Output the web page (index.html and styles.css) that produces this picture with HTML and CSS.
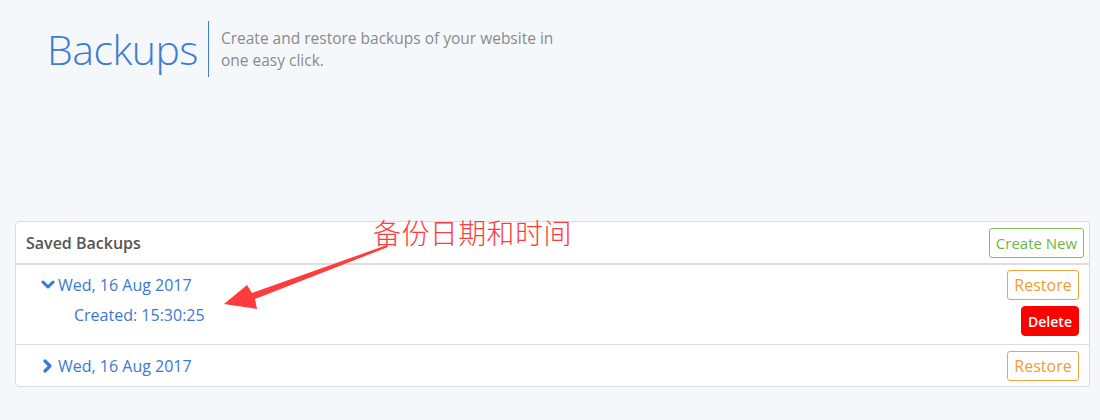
FILE: index.html
```html
<!DOCTYPE html>
<html lang="en">
<head>
<meta charset="utf-8">
<title>Backups</title>
<link rel="stylesheet" href="styles.css">
</head>
<body>
<div class="page">
  <header class="page-head">
    <h1 class="page-title">Backups</h1>
    <p class="page-desc">Create and restore backups of your website in<br>one easy click.</p>
  </header>

  <section class="card">
    <div class="card-head">
      <span class="card-title">Saved Backups</span>
      <button class="btn btn-green">Create New</button>
    </div>
    <div class="row row-open">
      <div class="row-left">
        <div class="date">
          <svg class="chev" width="14" height="14" viewBox="0 0 14 14"><polyline points="2,4 7,9 12,4" fill="none" stroke="#3a78d6" stroke-width="3" stroke-linecap="round" stroke-linejoin="round"/></svg>
          <span>Wed, 16 Aug 2017</span>
        </div>
        <div class="created">Created: 15:30:25</div>
      </div>
      <div class="row-right">
        <button class="btn btn-orange">Restore</button>
        <button class="btn btn-red">Delete</button>
      </div>
    </div>
    <div class="row">
      <div class="row-left">
        <div class="date">
          <svg class="chev chev-r" width="12" height="14" viewBox="0 0 12 14"><polyline points="3,2 8,7 3,12" fill="none" stroke="#3a78d6" stroke-width="3.2" stroke-linecap="round" stroke-linejoin="round"/></svg>
          <span>Wed, 16 Aug 2017</span>
        </div>
      </div>
      <div class="row-right">
        <button class="btn btn-orange">Restore</button>
      </div>
    </div>

    <div class="note">备份日期和时间</div>
    <svg class="note-arrow" width="170" height="70" viewBox="0 0 170 70">
      <polygon points="165,2 166,4 33,56 35,66 2,61 25,42 30,50" fill="#ff3b3b"/>
    </svg>
  </section>
</div>
</body>
</html>
```

FILE: styles.css
```css
* { box-sizing: border-box; }
html, body { margin: 0; padding: 0; }
body {
  background: #f5f8fb;
  font-family: "Open Sans", "Liberation Sans", sans-serif;
  width: 1100px;
  height: 420px;
  overflow: hidden;
}
.page {
  padding: 21px 10px 0 15px;
}
.page-head {
  display: flex;
  align-items: stretch;
  margin-left: 32px;
  height: 56px;
}
.page-title {
  margin: 0;
  font-weight: 300;
  font-size: 41px;
  line-height: 56px;
  color: #3d7bd6;
  padding-right: 10px;
  border-right: 1px solid #3d7bd6;
  letter-spacing: -0.5px;
}
.page-desc {
  margin: 6px 0 0 12px;
  font-size: 15.5px;
  line-height: 22px;
  color: #8a8a8a;
  font-weight: 400;
}
.card {
  position: relative;
  margin-top: 144px;
  background: #fff;
  border: 1px solid #dcdcdc;
  border-radius: 4px;
}
.card-head {
  display: flex;
  justify-content: space-between;
  align-items: center;
  height: 43px;
  padding: 0 5px 0 10px;
  border-bottom: 2px solid #dedede;
}
.card-title {
  font-size: 16px;
  font-weight: 600;
  color: #555;
}
.btn {
  font-family: "Open Sans", "Liberation Sans", sans-serif;
  height: 30px;
  border-radius: 3px;
  background: #fff;
  cursor: pointer;
  padding: 0 4px;
}
.btn-green {
  border: 1px solid #7cc454;
  color: #6cb844;
  font-size: 15px;
  width: 95px;
}
.btn-orange {
  border: 1px solid #f5a23a;
  color: #f59c2c;
  font-size: 16px;
  width: 72px;
}
.btn-red {
  border: 1px solid #ff0000;
  background: #ff0000;
  color: #fff;
  font-size: 14px;
  font-weight: 600;
  width: 58px;
  border-radius: 4px;
}
.row {
  display: flex;
  justify-content: space-between;
  align-items: flex-start;
  padding: 5px 10px 5px 25px;
  border-bottom: 1px solid #dedede;
}
.row + .row { border-bottom: none; padding-top: 6px; }
.row-open { padding-bottom: 8px; }
.row-left {
  display: flex;
  flex-direction: column;
  padding-top: 4px;
  color: #3a78d6;
  font-size: 16px;
  line-height: 22px;
}
.date {
  display: flex;
  align-items: center;
}
.chev { margin-right: 3px; }
.chev-r { margin-left: 1px; margin-right: 4px; }
.created {
  margin-top: 8px;
  padding-left: 33px;
}
.row-right {
  display: flex;
  flex-direction: column;
  align-items: flex-end;
  gap: 6px;
}
.note {
  position: absolute;
  left: 357px;
  top: -7px;
  font-family: "Noto Sans CJK SC", sans-serif;
  font-weight: 300;
  font-size: 28px;
  line-height: 34px;
  color: #ff3b3b;
  letter-spacing: 0.4px;
}
.note-arrow {
  position: absolute;
  left: 206px;
  top: 21px;
}
```
